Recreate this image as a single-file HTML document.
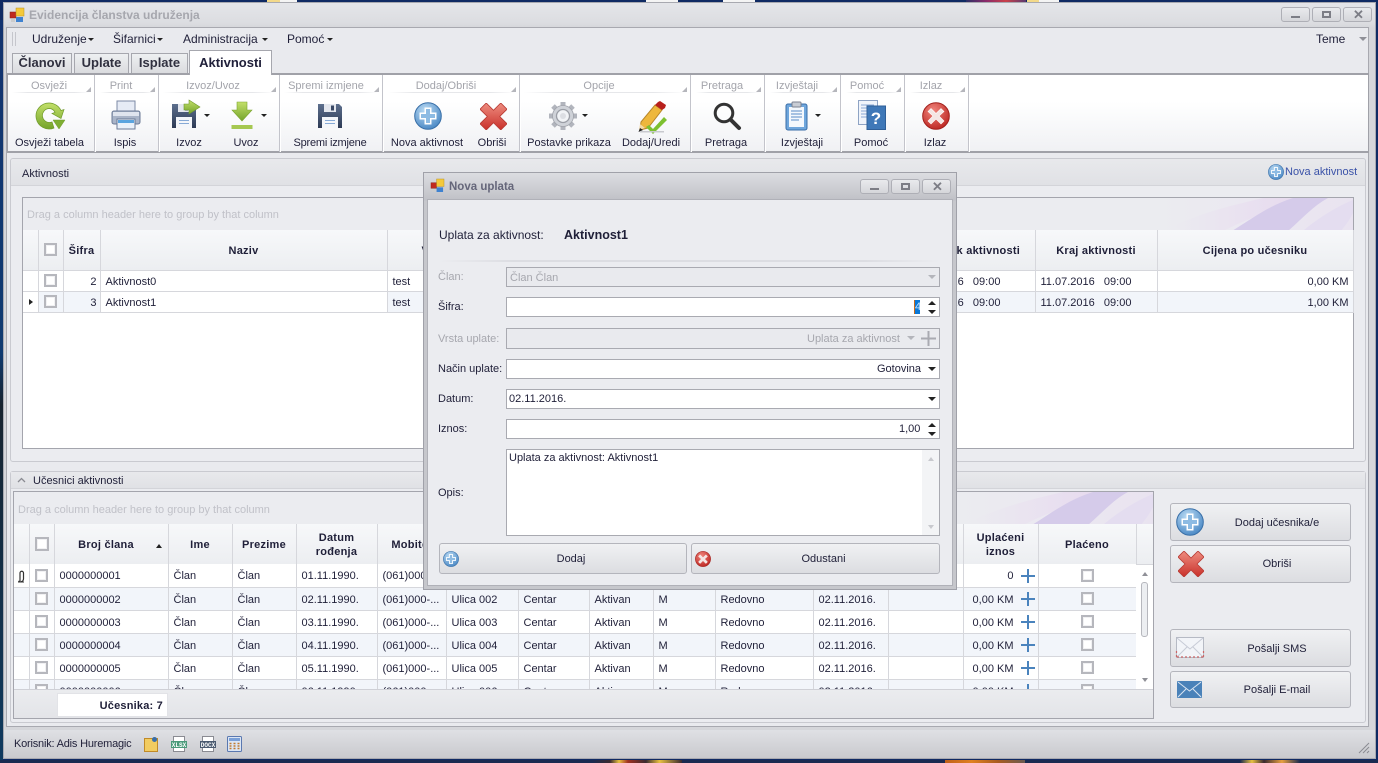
<!DOCTYPE html>
<html lang="bs"><head><meta charset="utf-8"><title>Evidencija članstva udruženja</title>
<style>
*{box-sizing:border-box}
html,body{margin:0;padding:0}
body{width:1378px;height:763px;overflow:hidden;position:relative;background:#0f2a63;font:11px/14px "Liberation Sans","DejaVu Sans",sans-serif;color:#1f1f38}
.a{position:absolute}
.t{position:absolute;white-space:nowrap}
.c{position:absolute;white-space:nowrap;transform:translateX(-50%)}
.gt{top:79px;color:#a3a4ab}
.bl{top:136px}
.sep{position:absolute;top:75px;width:2px;height:77px;border-left:1px solid #c3c4cb;border-right:1px solid #fff}
.ul{position:absolute;top:92px;height:1px;background:linear-gradient(90deg,#fff,#e6e7ea 20%,#e6e7ea 80%,#fff)}
.tri{position:absolute;top:87px;width:0;height:0;border-style:solid;border-width:0 0 5px 5px;border-color:transparent transparent #b5b6bc transparent}
.car{position:absolute;width:0;height:0;border-style:solid;border-width:3px 3px 0 3px;border-color:#222 transparent transparent transparent}
.tab{position:absolute;top:53px;height:21px;background:linear-gradient(#eef0f2,#d9dade);border:1px solid #a6a7ae;border-bottom:0;font:bold 13px/18px "Liberation Sans",sans-serif;text-align:center;color:#30303f}
table{border-collapse:collapse;table-layout:fixed;position:absolute}
td,th{padding:2px 4px 0 5px;border-right:1px solid #d6d7dc;border-bottom:1px solid #d6d7dc;white-space:nowrap;overflow:hidden}
th{background:linear-gradient(#f7f8fa,#eceef1);font-weight:bold;text-align:center;line-height:14px;letter-spacing:.25px;padding:2px 4px 0 4px}
.r{text-align:right}
.alt td{background:#f2f5fa}
td.w{background:#fff}
.cb{display:block;width:13px;height:13px;border:2px solid #b6b7bd;background:#fff;box-shadow:inset 0 0 0 1px #f1f1f3;margin:0 auto}
td.ck,th.ck{padding:0}
.btn{position:absolute;border:1px solid #b4b5bc;border-radius:3px;background:linear-gradient(#f0f1f3,#dcdde1);text-align:center;color:#1f1f38}
.wb{position:absolute;border:1px solid #aeafb6;border-radius:3px;background:linear-gradient(#e9eaed,#d5d6da)}
.in{position:absolute;left:506px;width:434px;border:1px solid #a9aab1;background:#fff}
.dis{background:#e9eaee;color:#a6a7ae}
.lb{position:absolute;left:438px}
.up{position:absolute;width:0;height:0;border-style:solid;border-width:0 4px 4px 4px;border-color:transparent transparent #222 transparent}
.dn{position:absolute;width:0;height:0;border-style:solid;border-width:4px 4px 0 4px;border-color:#222 transparent transparent transparent}
svg{position:absolute;overflow:visible}
</style></head><body>

<svg width="0" height="0" style="position:absolute">
<defs>
<radialGradient id="gb" cx=".4" cy=".3" r=".8"><stop offset="0" stop-color="#bcdcf4"/><stop offset="1" stop-color="#3f80c0"/></radialGradient>
<radialGradient id="gr" cx=".4" cy=".3" r=".8"><stop offset="0" stop-color="#f0857c"/><stop offset="1" stop-color="#b81e1a"/></radialGradient>
<linearGradient id="ggr" x1="0" y1="0" x2="0" y2="1"><stop offset="0" stop-color="#c3e06a"/><stop offset="1" stop-color="#74a32a"/></linearGradient>
<linearGradient id="gfl" x1="0" y1="0" x2="0" y2="1"><stop offset="0" stop-color="#5d6f8d"/><stop offset="1" stop-color="#2d3a55"/></linearGradient>
<linearGradient id="gx" x1="0" y1="0" x2="0" y2="1"><stop offset="0" stop-color="#ee8d80"/><stop offset="1" stop-color="#c9302a"/></linearGradient>
<linearGradient id="sw" x1="0" x2="1"><stop offset="0" stop-color="#ebecf0"/><stop offset=".5" stop-color="#ebe8f1"/><stop offset="1" stop-color="#e9e3f0"/></linearGradient>
<linearGradient id="swp" x1="0" x2="1"><stop offset="0" stop-color="#e8dcef" stop-opacity="0"/><stop offset="1" stop-color="#e6d8ee"/></linearGradient>
<symbol id="pc" viewBox="0 0 28 28"><circle cx="14" cy="14" r="13.3" fill="url(#gb)" stroke="#3a70a8"/><path d="M10.500 5.500h7v5h5v7h-5v5h-7v-5h-5v-7h5z" fill="#fff"/><path d="M12 7h4v5h5v4h-5v5h-4v-5H7v-4h5z" fill="#8dbbe3"/></symbol>
<symbol id="xc" viewBox="0 0 28 28"><circle cx="14" cy="14" r="13.3" fill="url(#gr)" stroke="#a3201c"/><path d="M9 6.500l5 5 5-5 3 3-5 4.500 5 5-3 3-5-5-5 5-3-3 5-5-5-4.500z" fill="#f4e5e3" stroke="#fff" stroke-width=".6"/></symbol>
<symbol id="rx" viewBox="0 0 26 26"><path d="M6 0l7 7 7-7 6 6-7 7 7 7-6 6-7-7-7 7-6-6 7-7-7-7z" fill="url(#gx)" stroke="#b73a33" stroke-width=".8"/></symbol>
<symbol id="fl" viewBox="0 0 26 26"><path d="M1 1h21l3 3v21H1z" fill="url(#gfl)"/><rect x="7" y="1" width="12" height="8" fill="#e4e7ee"/><rect x="14" y="2.500" width="3" height="5" fill="#3a4966"/><rect x="5" y="14" width="16" height="11" fill="#f4f6fa"/><path d="M8 17.500h10M8 20.500h10" stroke="#86a9d6" stroke-width="1"/></symbol>
</defs>
</svg>

<!-- desktop strips -->
<div class="a" style="left:267px;top:0;width:13px;height:3px;background:#f3d98a"></div>
<div class="a" style="left:280px;top:0;width:17px;height:3px;background:#f4f4f4"></div>
<div class="a" style="left:646px;top:0;width:32px;height:3px;background:#f4f4f4"></div>
<div class="a" style="left:723px;top:0;width:32px;height:3px;background:#f4f4f4"></div>
<div class="a" style="left:966px;top:0;width:60px;height:3px;background:linear-gradient(90deg,#2a2f66,#8a2a6a,#c9404a,#5a3a70)"></div>
<div class="a" style="left:1027px;top:0;width:12px;height:3px;background:#f3d98a"></div>
<div class="a" style="left:1039px;top:0;width:20px;height:3px;background:#f4f4f4"></div>
<div class="a" style="left:0;top:760px;width:1378px;height:3px;background:#1a2a50"></div>
<div class="a" style="left:592px;top:760px;width:90px;height:3px;background:linear-gradient(90deg,#1a2a50,#3a2a30 20%,#e8c040 30%,#a03020 40%,#3a2a30 60%,#e8c040 75%,#3a2a30)"></div>
<div class="a" style="left:945px;top:760px;width:80px;height:3px;background:linear-gradient(90deg,#c0601a,#e08020,#a85a20,#6a5a50)"></div>
<div class="a" style="left:1240px;top:760px;width:60px;height:3px;background:linear-gradient(90deg,#1a2a50,#e8c040 20%,#3a2a30 40%,#e8a040 70%,#1a2a50)"></div>
<div class="a" style="left:0;top:20px;width:3px;height:740px;background:linear-gradient(#12336f,#0f3a70 45%,#16232f 52%,#0f3a5f)"></div>

<!-- main window -->
<div class="a" style="left:3px;top:2px;width:1373px;height:757px;background:linear-gradient(#e4e5e9 0,#dcdde1 20px,#d5d6da 25px);border:1px solid #a8a9b0"></div>
<div class="a" style="left:3px;top:730px;width:1373px;height:29px;background:linear-gradient(#dfe0e4,#c9cace);border:1px solid #a8a9b0;border-top:0"></div>
<svg style="left:10px;top:8px" width="14" height="14" viewBox="0 0 14 14"><rect x="0" y="4" width="6" height="6" fill="#c02a20" stroke="#8a2018" stroke-width=".5"/><rect x="6" y="0" width="8" height="8" fill="#f4c93a" stroke="#b89020" stroke-width=".5"/><rect x="6" y="9" width="7" height="5" fill="#3f82d0"/><rect x="1" y="11" width="4" height="3" fill="#ccc"/></svg>
<div class="t" style="left:29px;top:8px;font:bold 12px/14px 'Liberation Sans',sans-serif;color:#a6a7ae">Evidencija članstva udruženja</div>
<div class="wb" style="left:1281px;top:7px;width:29px;height:15px"></div><div class="a" style="left:1291px;top:16px;width:9px;height:2px;background:#7c7d85"></div>
<div class="wb" style="left:1312px;top:7px;width:29px;height:15px"></div><div class="a" style="left:1322px;top:11px;width:9px;height:7px;border:2px solid #7c7d85"></div>
<div class="wb" style="left:1343px;top:7px;width:29px;height:15px"></div><div class="t" style="left:1353px;top:7px;font:bold 13px/15px 'Liberation Sans',sans-serif;color:#7c7d85">✕</div>

<!-- content -->
<div class="a" style="left:6px;top:27px;width:1363px;height:700px;background:#e9eaee;border:1px solid #a8a9b0"></div>
<div class="a" style="left:12px;top:32px;width:4px;height:14px;border-left:1px solid #c5c6cc;border-right:1px solid #c5c6cc"></div>
<div class="t" style="left:32px;top:32px;font-size:12px">Udruženje</div><div class="car" style="left:88px;top:38px"></div>
<div class="t" style="left:113px;top:32px;font-size:12px">Šifarnici</div><div class="car" style="left:157px;top:38px"></div>
<div class="t" style="left:183px;top:32px;font-size:12px">Administracija</div><div class="car" style="left:262px;top:38px"></div>
<div class="t" style="left:287px;top:32px;font-size:12px">Pomoć</div><div class="car" style="left:327px;top:38px"></div>
<div class="t" style="left:1316px;top:32px;font-size:12px">Teme</div>
<div class="car" style="left:1359px;top:37px;border-width:4px 4px 0 4px;border-top-color:#8f9097"></div>

<div class="tab" style="left:12px;width:60px">Članovi</div>
<div class="tab" style="left:74px;width:55px">Uplate</div>
<div class="tab" style="left:131px;width:57px">Isplate</div>

<!-- ribbon -->
<div class="a" style="left:7px;top:73px;width:1362px;height:80px;background:linear-gradient(#fff 0,#fff 35%,#f0f1f4);border:1px solid #a0a1a8;border-width:2px 1px 2px 1px"></div>
<div class="tab" style="left:189px;top:50px;width:83px;height:25px;background:#fff;color:#20203a;border-color:#a6a7ae;font-size:13px;line-height:23px">Aktivnosti</div>

<div class="sep" style="left:94px"></div><div class="sep" style="left:158px"></div><div class="sep" style="left:279px"></div><div class="sep" style="left:382px"></div><div class="sep" style="left:519px"></div><div class="sep" style="left:690px"></div><div class="sep" style="left:764px"></div><div class="sep" style="left:840px"></div><div class="sep" style="left:904px"></div><div class="sep" style="left:968px"></div>
<div class="ul" style="left:12px;width:78px"></div><div class="ul" style="left:100px;width:54px"></div><div class="ul" style="left:163px;width:112px"></div><div class="ul" style="left:284px;width:94px"></div><div class="ul" style="left:388px;width:128px"></div><div class="ul" style="left:524px;width:162px"></div><div class="ul" style="left:696px;width:64px"></div><div class="ul" style="left:770px;width:66px"></div><div class="ul" style="left:846px;width:54px"></div><div class="ul" style="left:910px;width:54px"></div>
<div class="tri" style="left:86px"></div><div class="tri" style="left:150px"></div><div class="tri" style="left:271px"></div><div class="tri" style="left:374px"></div><div class="tri" style="left:511px"></div><div class="tri" style="left:682px"></div><div class="tri" style="left:756px"></div><div class="tri" style="left:832px"></div><div class="tri" style="left:896px"></div><div class="tri" style="left:960px"></div>

<div class="c gt" style="left:49px">Osvježi</div>
<div class="c gt" style="left:121px">Print</div>
<div class="c gt" style="left:213px">Izvoz/Uvoz</div>
<div class="c gt" style="left:326px">Spremi izmjene</div>
<div class="c gt" style="left:446px">Dodaj/Obriši</div>
<div class="c gt" style="left:599px">Opcije</div>
<div class="c gt" style="left:722px">Pretraga</div>
<div class="c gt" style="left:797px">Izvještaji</div>
<div class="c gt" style="left:867px">Pomoć</div>
<div class="c gt" style="left:931px">Izlaz</div>

<div class="c bl" style="left:49.5px">Osvježi tabela</div>
<div class="c bl" style="left:125px">Ispis</div>
<div class="c bl" style="left:189px">Izvoz</div>
<div class="c bl" style="left:246px">Uvoz</div>
<div class="c bl" style="left:330px;letter-spacing:-.2px">Spremi izmjene</div>
<div class="c bl" style="left:427px">Nova aktivnost</div>
<div class="c bl" style="left:492px">Obriši</div>
<div class="c bl" style="left:569px">Postavke prikaza</div>
<div class="c bl" style="left:651px">Dodaj/Uredi</div>
<div class="c bl" style="left:726px">Pretraga</div>
<div class="c bl" style="left:802px">Izvještaji</div>
<div class="c bl" style="left:871px">Pomoć</div>
<div class="c bl" style="left:935px">Izlaz</div>

<!-- ribbon icons -->
<svg style="left:35px;top:102px" width="31" height="28" viewBox="0 0 31 28"><path d="M14 1a13 13 0 1 0 5 25l-2-6a7 7 0 1 1-3-13.5c3 0 5 1.500 6 4l-3 1 9 5 3-9-3 1C24 4 19 1 14 1z" fill="url(#ggr)" stroke="#6f9a2a" stroke-width=".7"/><path d="M18 18h12l-6 9z" fill="#7fae33" stroke="#6f9a2a" stroke-width=".5"/></svg>
<svg style="left:111px;top:100px" width="30" height="30" viewBox="0 0 30 30"><rect x="6" y="1" width="18" height="11" fill="#e6ebf5" stroke="#7c8aa5"/><rect x="1" y="11" width="28" height="13" rx="2" fill="#a9b4c8" stroke="#6c7a96"/><rect x="2" y="12" width="26" height="4" fill="#dfe4ee"/><rect x="6" y="19" width="18" height="10" fill="#eaf1fa" stroke="#6c7a96"/><rect x="7" y="20" width="16" height="3" fill="#5aa4df"/></svg>
<svg style="left:171px;top:100px" width="30" height="30" viewBox="0 0 30 30"><use href="#fl" x="0" y="3" width="26" height="26"/><path d="M18 0l11 7-11 7v-4h-5V4h5z" fill="url(#ggr)" stroke="#6f9a2a" stroke-width=".6"/></svg>
<div class="car" style="left:204px;top:114px"></div>
<svg style="left:231px;top:102px" width="22" height="28" viewBox="0 0 22 28"><path d="M6 0h10v8h5L11 19 1 8h5z" fill="url(#ggr)" stroke="#7ba52f" stroke-width=".6"/><rect x="0.5" y="23" width="21" height="4" fill="#a6c851"/></svg>
<div class="car" style="left:261px;top:114px"></div>
<svg style="left:317px;top:103px" width="26" height="26"><use href="#fl" width="26" height="26"/></svg>
<svg style="left:414px;top:102px" width="28" height="28"><use href="#pc" width="28" height="28"/></svg>
<svg style="left:480px;top:103px" width="27" height="27"><use href="#rx" width="27" height="27"/></svg>
<svg style="left:548px;top:101px" width="30" height="30" viewBox="0 0 30 30"><g stroke="#b2b5bd" stroke-width="5"><path d="M15 1v5M15 24v5M1 15h5M24 15h5M5 5l3.500 3.500M21.500 21.500l3.500 3.500M5 25l3.500-3.500M21.500 8.500L25 5"/></g><circle cx="15" cy="15" r="10.500" fill="#cfd2d8" stroke="#a0a3ab" stroke-width=".8"/><circle cx="15" cy="15" r="6.500" fill="#f1f3f6" stroke="#9a9da5" stroke-width="1.300"/><circle cx="15" cy="15" r="3" fill="#dcdee3"/></svg>
<div class="car" style="left:582px;top:114px"></div>
<svg style="left:638px;top:101px" width="30" height="32" viewBox="0 0 30 32"><path d="M17 4l7 5-14 18-8 2 1-8z" fill="#eeb73d" stroke="#b8862a"/><path d="M20 1l2-1 6 4-1 3-3 2-7-5z" fill="#b8201c"/><path d="M1 29l1-6 5 4z" fill="#f3d9a8"/><path d="M0.500 31l1.500-4 3 2z" fill="#222"/><path d="M11 24l4 4 11-12 3 3-14 14-7-7z" fill="#7dc030"/><rect x="2" y="30" width="24" height="1.500" fill="#c8c9ce"/></svg>
<svg style="left:713px;top:102px" width="28" height="28" viewBox="0 0 28 28"><circle cx="11" cy="11" r="8.8" fill="#fff" fill-opacity=".3" stroke="#333" stroke-width="3"/><path d="M17.500 17.500L26 26" stroke="#333" stroke-width="4" stroke-linecap="round"/></svg>
<svg style="left:785px;top:101px" width="23" height="30" viewBox="0 0 23 30"><rect x="1" y="3" width="21" height="26" rx="2" fill="#6fa6dc" stroke="#3a6ea8"/><rect x="4" y="6" width="15" height="20" fill="#f4f8fd"/><rect x="7" y="1" width="9" height="5" rx="1" fill="#c8ccd4" stroke="#7c8290"/><path d="M6 10h11M6 13h11M6 16h11M6 19h8" stroke="#5a8dc8"/></svg>
<div class="car" style="left:815px;top:114px"></div>
<svg style="left:858px;top:100px" width="28" height="30" viewBox="0 0 28 30"><rect x="0.500" y="0.500" width="19" height="24" fill="#f0f4fb" stroke="#8ea3c4"/><path d="M3 5h13M3 8h13M3 11h7M3 14h7M3 17h7" stroke="#8aa8d4"/><rect x="9" y="6" width="18.500" height="23.500" fill="#3f78b8" stroke="#2f5f98"/><text x="18" y="24" text-anchor="middle" font-family="Liberation Sans" font-weight="bold" font-size="17" fill="#fff">?</text></svg>
<svg style="left:922px;top:102px" width="28" height="28"><use href="#xc" width="28" height="28"/></svg>

<!-- panel 1 -->
<div class="a" style="left:10px;top:158px;width:1356px;height:304px;background:#ebecf0;border:1px solid #c9cad0;border-radius:3px"></div>
<div class="a" style="left:11px;top:159px;width:1354px;height:27px;background:linear-gradient(#e8e9ec,#e0e1e5);border-bottom:1px solid #d3d4d9;border-radius:3px 3px 0 0"></div>
<div class="t" style="left:22px;top:167px">Aktivnosti</div>
<svg style="left:1268px;top:164px" width="16" height="16"><use href="#pc" width="16" height="16"/></svg>
<div class="t" style="left:1285px;top:165px;color:#3a52a8">Nova aktivnost</div>

<div class="a" style="left:22px;top:197px;width:1332px;height:252px;background:#fff;border:1px solid #a4a5ad"></div>
<div class="a" style="left:23px;top:198px;width:1330px;height:33px;background:#ebecf0;border-bottom:1px solid #cfd0d6;overflow:hidden">
<div class="t" style="left:4px;top:10px;color:#c0c1c8">Drag a column header here to group by that column</div>
<svg style="left:1130px;top:0" width="200" height="33" viewBox="0 0 200 33"><rect width="200" height="33" fill="url(#sw)"/><path d="M20 28C50 14 85 6 110 0H164C130 8 100 18 70 33H30z" fill="url(#swp)"/><path d="M79 33C100 20 115 8 140 0H175C160 8 150 20 135 33z" fill="#d5cbea"/><path d="M150 33C165 20 185 8 200 2V15C195 25 190 30 188 33z" fill="#e4ddf0"/></svg>
</div>
<table style="left:23px;top:230px;width:1330px">
<colgroup><col style="width:15px"><col style="width:25px"><col style="width:37px"><col style="width:287px"><col style="width:110px"><col style="width:407px"><col style="width:131px"><col style="width:122px"><col style="width:196px"></colgroup>
<tr style="height:40px"><th></th><th class="ck"><i class="cb"></i></th><th style="padding:2px 0 0">Šifra</th><th>Naziv</th><th>Voditelj</th><th></th><th>Početak aktivnosti</th><th>Kraj aktivnosti</th><th>Cijena po učesniku</th></tr>
<tr style="height:21px"><td class="w"></td><td class="ck w"><i class="cb"></i></td><td class="r w" style="padding-right:3px">2</td><td class="w">Aktivnost0</td><td class="w">test</td><td class="w"></td><td class="w">11.07.2016 &nbsp; 09:00</td><td class="w">11.07.2016 &nbsp; 09:00</td><td class="r w">0,00 KM</td></tr>
<tr class="alt" style="height:21px"><td class="w" style="padding:0"><span class="a" style="left:6px;top:69px;width:0;height:0;border:solid transparent;border-width:3.5px 0 3.5px 4px;border-left-color:#222"></span></td><td class="ck"><i class="cb"></i></td><td class="r" style="padding-right:3px">3</td><td class="w">Aktivnost1</td><td>test</td><td></td><td>11.07.2016 &nbsp; 09:00</td><td>11.07.2016 &nbsp; 09:00</td><td class="r">1,00 KM</td></tr>
</table>

<!-- panel 2 -->
<div class="a" style="left:10px;top:471px;width:1356px;height:252px;background:#ebecf0;border:1px solid #c9cad0;border-radius:3px"></div>
<div class="a" style="left:11px;top:472px;width:1354px;height:17px;background:linear-gradient(#e8e9ec,#e0e1e5);border-bottom:1px solid #d3d4d9"></div>
<svg style="left:17px;top:477px" width="9" height="6" viewBox="0 0 9 6"><path d="M1 5l3.5-3.500L8 5" fill="none" stroke="#8a8b92" stroke-width="1.3"/></svg>
<div class="t" style="left:33px;top:474px">Učesnici aktivnosti</div>

<div class="a" style="left:13px;top:491px;width:1141px;height:228px;background:#fff;border:1px solid #a4a5ad;overflow:hidden">
<div class="a" style="left:0;top:0;width:1139px;height:33px;background:#ebecf0;border-bottom:1px solid #cfd0d6;overflow:hidden">
<div class="t" style="left:4px;top:11px;color:#c0c1c8">Drag a column header here to group by that column</div>
<svg style="left:939px;top:0" width="200" height="33" viewBox="0 0 200 33"><rect width="200" height="33" fill="url(#sw)"/><path d="M20 28C50 14 85 6 110 0H164C130 8 100 18 70 33H30z" fill="url(#swp)"/><path d="M79 33C100 20 115 8 140 0H175C160 8 150 20 135 33z" fill="#d5cbea"/><path d="M150 33C165 20 185 8 200 2V15C195 25 190 30 188 33z" fill="#e4ddf0"/></svg>
</div>
<table style="left:0;top:32px;width:1139px">
<colgroup><col style="width:15px"><col style="width:25px"><col style="width:114px"><col style="width:64px"><col style="width:64px"><col style="width:81px"><col style="width:69px"><col style="width:72px"><col style="width:71px"><col style="width:64px"><col style="width:62px"><col style="width:98px"><col style="width:75px"><col style="width:75px"><col style="width:75px"><col style="width:98px"><col style="width:17px"></colgroup>
<tr style="height:40px"><th></th><th class="ck"><i class="cb" style="width:14px;height:14px"></i></th><th style="padding-right:14px">Broj člana<span class="up" style="left:142px;top:20px;border-width:0 3.5px 4px 3.5px"></span></th><th>Ime</th><th style="padding:2px 0 0">Prezime</th><th style="white-space:normal;padding:2px 12px 0">Datum rođenja</th><th>Mobitel</th><th>Adresa</th><th>Općina</th><th>Status</th><th>Spol</th><th>Vrsta</th><th>Datum</th><th></th><th style="white-space:normal;padding:2px 6px 0">Uplaćeni iznos</th><th>Plaćeno</th><th></th></tr>
</table>
</div>

<table style="left:14px;top:564px;width:1122px;background:#fff">
<colgroup><col style="width:15px"><col style="width:25px"><col style="width:114px"><col style="width:64px"><col style="width:64px"><col style="width:81px"><col style="width:69px"><col style="width:72px"><col style="width:71px"><col style="width:64px"><col style="width:62px"><col style="width:98px"><col style="width:75px"><col style="width:75px"><col style="width:75px"><col style="width:98px"></colgroup>
<tr style="height:23px"><td style="padding:0"><svg style="left:3px;top:6px" width="8" height="13" viewBox="0 0 8 13"><path d="M3 11V3a1.700 1.700 0 0 1 3.500 0v6a3 3 0 0 1-5 2" fill="none" stroke="#333" stroke-width="1.2"/><path d="M1 12h6" stroke="#333"/></svg></td><td class="ck"><i class="cb"></i></td><td>0000000001</td><td>Član</td><td>Član</td><td>01.11.1990.</td><td>(061)000-...</td><td>Ulica 001</td><td>Centar</td><td>Aktivan</td><td>M</td><td>Redovno</td><td>02.11.2016.</td><td></td><td class="r" style="padding-right:24px">0</td><td class="ck"><i class="cb"></i></td></tr>
<tr class="alt" style="height:23px"><td></td><td class="ck"><i class="cb"></i></td><td>0000000002</td><td>Član</td><td>Član</td><td>02.11.1990.</td><td>(061)000-...</td><td>Ulica 002</td><td>Centar</td><td>Aktivan</td><td>M</td><td>Redovno</td><td>02.11.2016.</td><td></td><td class="r" style="padding-right:24px">0,00 KM</td><td class="ck"><i class="cb"></i></td></tr>
<tr style="height:23px"><td></td><td class="ck"><i class="cb"></i></td><td>0000000003</td><td>Član</td><td>Član</td><td>03.11.1990.</td><td>(061)000-...</td><td>Ulica 003</td><td>Centar</td><td>Aktivan</td><td>M</td><td>Redovno</td><td>02.11.2016.</td><td></td><td class="r" style="padding-right:24px">0,00 KM</td><td class="ck"><i class="cb"></i></td></tr>
<tr class="alt" style="height:23px"><td></td><td class="ck"><i class="cb"></i></td><td>0000000004</td><td>Član</td><td>Član</td><td>04.11.1990.</td><td>(061)000-...</td><td>Ulica 004</td><td>Centar</td><td>Aktivan</td><td>M</td><td>Redovno</td><td>02.11.2016.</td><td></td><td class="r" style="padding-right:24px">0,00 KM</td><td class="ck"><i class="cb"></i></td></tr>
<tr style="height:23px"><td></td><td class="ck"><i class="cb"></i></td><td>0000000005</td><td>Član</td><td>Član</td><td>05.11.1990.</td><td>(061)000-...</td><td>Ulica 005</td><td>Centar</td><td>Aktivan</td><td>M</td><td>Redovno</td><td>02.11.2016.</td><td></td><td class="r" style="padding-right:24px">0,00 KM</td><td class="ck"><i class="cb"></i></td></tr>
<tr class="alt" style="height:23px"><td></td><td class="ck"><i class="cb"></i></td><td>0000000006</td><td>Član</td><td>Član</td><td>06.11.1990.</td><td>(061)000-...</td><td>Ulica 006</td><td>Centar</td><td>Aktivan</td><td>M</td><td>Redovno</td><td>02.11.2016.</td><td></td><td class="r" style="padding-right:24px">0,00 KM</td><td class="ck"><i class="cb"></i></td></tr>
</table>
<!-- plus icons -->
<svg style="left:1021px;top:569px" width="14" height="120" viewBox="0 0 14 120" fill="none" stroke="#4a83bd" stroke-width="2"><path d="M7 0v14M0 7h14M7 23v14M0 30h14M7 46v14M0 53h14M7 69v14M0 76h14M7 92v14M0 99h14M7 115v5"/></svg>
<!-- footer -->
<div class="a" style="left:14px;top:689px;width:1139px;height:29px;background:linear-gradient(#ebecef,#e3e4e8);border-top:1px solid #cfd0d6"></div>
<div class="a" style="left:57px;top:693px;width:111px;height:24px;background:#fff;border:1px solid #e2e3e7;text-align:right;padding:5px 4px 0 0;font-weight:bold;letter-spacing:.2px">Učesnika: 7</div>
<!-- scrollbar -->
<div class="a" style="left:1136px;top:565px;width:17px;height:124px;background:#fff"></div>
<div class="a" style="left:1142px;top:572px;width:0;height:0;border:solid transparent;border-width:0 3.5px 4px 3.5px;border-bottom-color:#8f9097"></div>
<div class="a" style="left:1142px;top:678px;width:0;height:0;border:solid transparent;border-width:4px 3.5px 0 3.5px;border-top-color:#8f9097"></div>
<div class="a" style="left:1141px;top:582px;width:7px;height:55px;background:#eceef1;border:1px solid #b6b7bd;border-radius:3px"></div>

<!-- side buttons -->
<div class="btn" style="left:1170px;top:503px;width:181px;height:38px;line-height:38px;padding-left:33px">Dodaj učesnika/e</div>
<svg style="left:1176px;top:508px" width="28" height="28"><use href="#pc" width="28" height="28"/></svg>
<div class="btn" style="left:1170px;top:545px;width:181px;height:38px;line-height:37px;padding-left:33px">Obriši</div>
<svg style="left:1178px;top:551px" width="26" height="26"><use href="#rx" width="26" height="26"/></svg>
<div class="btn" style="left:1170px;top:629px;width:181px;height:38px;line-height:38px;padding-left:33px">Pošalji SMS</div>
<svg style="left:1176px;top:637px" width="28" height="21" viewBox="0 0 28 21"><rect x="0.500" y="0.500" width="27" height="20" fill="#f2f4f8" stroke="#b6bac4"/><path d="M1 1l13 11L27 1M1 20l10-10M27 20L17 10" fill="none" stroke="#c7cbd6"/><path d="M1 20h27M0.500 14v6M27.500 14v6" stroke="#c66" stroke-width="1.2" stroke-dasharray="2 2"/></svg>
<div class="btn" style="left:1170px;top:671px;width:181px;height:37px;line-height:37px;padding-left:33px">Pošalji E-mail</div>
<svg style="left:1177px;top:681px" width="25" height="17" viewBox="0 0 25 17"><rect width="25" height="17" rx="1" fill="#4a82b9"/><path d="M1 1l11.500 9L24 1M1 16l8-8M24 16l-8-8" fill="none" stroke="#dbe6f2" stroke-width="1"/></svg>

<!-- status bar -->
<div class="t" style="left:14px;top:737px;letter-spacing:-.2px">Korisnik: Adis Huremagic</div>
<svg style="left:144px;top:736px" width="15" height="16" viewBox="0 0 15 16"><rect x="0.500" y="2.500" width="13" height="13" fill="#f2cc60" stroke="#c08a28"/><rect x="8" y="1" width="5" height="5" rx="2.500" fill="#3a6ea8"/></svg>
<svg style="left:171px;top:736px" width="16" height="16" viewBox="0 0 16 16"><rect x="2.500" y="0.500" width="11" height="15" fill="#fff" stroke="#8a8b92"/><rect x="0" y="5" width="16" height="7" fill="#4a9a7a"/><text x="8" y="11" text-anchor="middle" font-family="Liberation Mono" font-size="6" font-weight="bold" fill="#fff">XLSX</text></svg>
<svg style="left:200px;top:736px" width="16" height="16" viewBox="0 0 16 16"><rect x="2.500" y="0.500" width="11" height="15" fill="#fff" stroke="#8a8b92"/><rect x="0" y="5" width="16" height="7" fill="#4a5a70"/><text x="8" y="11" text-anchor="middle" font-family="Liberation Mono" font-size="6" font-weight="bold" fill="#fff">DOCX</text></svg>
<svg style="left:227px;top:736px" width="15" height="16" viewBox="0 0 15 16"><rect x="0.500" y="0.500" width="14" height="15" rx="1" fill="#dce6f4" stroke="#5a78b0"/><rect x="2" y="2" width="11" height="3" fill="#7aa0d8"/><path d="M2.500 7.500h2M6.500 7.500h2M10.500 7.500h2M2.500 10h2M6.500 10h2M10.500 10h2M2.500 12.500h2M6.500 12.500h2M10.500 12.500h2" stroke="#c07a30" stroke-width="1.5"/></svg>
<svg style="left:1358px;top:742px" width="12" height="12" viewBox="0 0 12 12"><path d="M1 11L11 1M5 11l6-6M9 11l2-2" stroke="#8a8b92"/></svg>

<!-- dialog -->
<div class="a" style="left:423px;top:172px;width:534px;height:418px;background:linear-gradient(#dcdde1 0,#c0c1c7 27px,#c6c7cc 28px);border:1px solid #a0a1a9"></div>
<svg style="left:431px;top:179px" width="13" height="13" viewBox="0 0 14 14"><rect x="0" y="4" width="6" height="6" fill="#c02a20" stroke="#8a2018" stroke-width=".5"/><rect x="6" y="0" width="8" height="8" fill="#f4c93a" stroke="#b89020" stroke-width=".5"/><rect x="6" y="9" width="7" height="5" fill="#3f82d0"/><rect x="1" y="11" width="4" height="3" fill="#ccc"/></svg>
<div class="t" style="left:449px;top:180px;font-weight:bold;font-size:11.5px;color:#65667a">Nova uplata</div>
<div class="wb" style="left:860px;top:179px;width:29px;height:15px"></div><div class="a" style="left:870px;top:188px;width:9px;height:2px;background:#7c7d85"></div>
<div class="wb" style="left:891px;top:179px;width:29px;height:15px"></div><div class="a" style="left:901px;top:183px;width:9px;height:7px;border:2px solid #7c7d85"></div>
<div class="wb" style="left:922px;top:179px;width:29px;height:15px"></div><div class="t" style="left:932px;top:179px;font:bold 13px/15px 'Liberation Sans',sans-serif;color:#7c7d85">✕</div>
<div class="a" style="left:427px;top:199px;width:526px;height:387px;background:#ebecf0;border:1px solid #b0b1b8"></div>
<div class="t" style="left:439px;top:228px;font-size:12px">Uplata za aktivnost:</div>
<div class="t" style="left:564px;top:228px;font-size:12.5px;font-weight:bold">Aktivnost1</div>
<div class="a" style="left:439px;top:260px;width:501px;height:2px;background:linear-gradient(90deg,#ebecf0,#dcdde2 15%,#dcdde2 85%,#ebecf0)"></div>

<div class="lb" style="top:270px;color:#a6a7ae">Član:</div>
<div class="in dis" style="top:267px;height:20px;padding:3px 3px"><span>Član Član</span></div>
<div class="dn" style="left:928px;top:275px;border-top-color:#b4b5bb"></div>

<div class="lb" style="top:300px">Šifra:</div>
<div class="in" style="top:297px;height:20px"></div>
<div class="a" style="left:914px;top:300px;width:6px;height:14px;background:#0a78d7;color:#cfe5f8;font-size:11px;line-height:14px;overflow:hidden;border-left:1px solid #c86a1a">4</div>
<div class="up" style="left:928px;top:301px"></div><div class="dn" style="left:928px;top:310px"></div>

<div class="lb" style="top:332px;color:#a6a7ae">Vrsta uplate:</div>
<div class="in dis" style="top:328px;height:21px"></div>
<div class="t" style="left:807px;top:332px;color:#a6a7ae">Uplata za aktivnost</div>
<div class="dn" style="left:907px;top:336px;border-top-color:#b4b5bb"></div>
<svg style="left:921px;top:331px" width="15" height="15" viewBox="0 0 15 15"><path d="M7.500 0v15M0 7.500h15" stroke="#a9aab1" stroke-width="2"/></svg>

<div class="lb" style="top:362px">Način uplate:</div>
<div class="in" style="top:359px;height:20px"></div>
<div class="t" style="left:877px;top:362px">Gotovina</div>
<div class="dn" style="left:928px;top:367px"></div>

<div class="lb" style="top:392px">Datum:</div>
<div class="in" style="top:389px;height:20px;padding:2px 2px">02.11.2016.</div>
<div class="dn" style="left:928px;top:397px"></div>

<div class="lb" style="top:422px">Iznos:</div>
<div class="in" style="top:419px;height:20px"></div>
<div class="t" style="left:899px;top:422px">1,00</div>
<div class="up" style="left:928px;top:423px"></div><div class="dn" style="left:928px;top:432px"></div>

<div class="lb" style="top:486px">Opis:</div>
<div class="in" style="top:449px;height:87px;padding:1px 2px">Uplata za aktivnost: Aktivnost1</div>
<div class="a" style="left:922px;top:450px;width:17px;height:85px;background:#f3f4f6"></div>
<div class="a" style="left:928px;top:457px;width:0;height:0;border:solid transparent;border-width:0 3.5px 4px 3.5px;border-bottom-color:#c8c9ce"></div>
<div class="a" style="left:928px;top:525px;width:0;height:0;border:solid transparent;border-width:4px 3.5px 0 3.5px;border-top-color:#c8c9ce"></div>

<div class="btn" style="left:439px;top:543px;width:248px;height:31px;line-height:30px;padding-left:16px">Dodaj</div>
<svg style="left:443px;top:551px" width="16" height="16"><use href="#pc" width="16" height="16"/></svg>
<div class="btn" style="left:691px;top:543px;width:249px;height:31px;line-height:30px;padding-left:16px">Odustani</div>
<svg style="left:695px;top:551px" width="16" height="16"><use href="#xc" width="16" height="16"/></svg>
</body></html>
